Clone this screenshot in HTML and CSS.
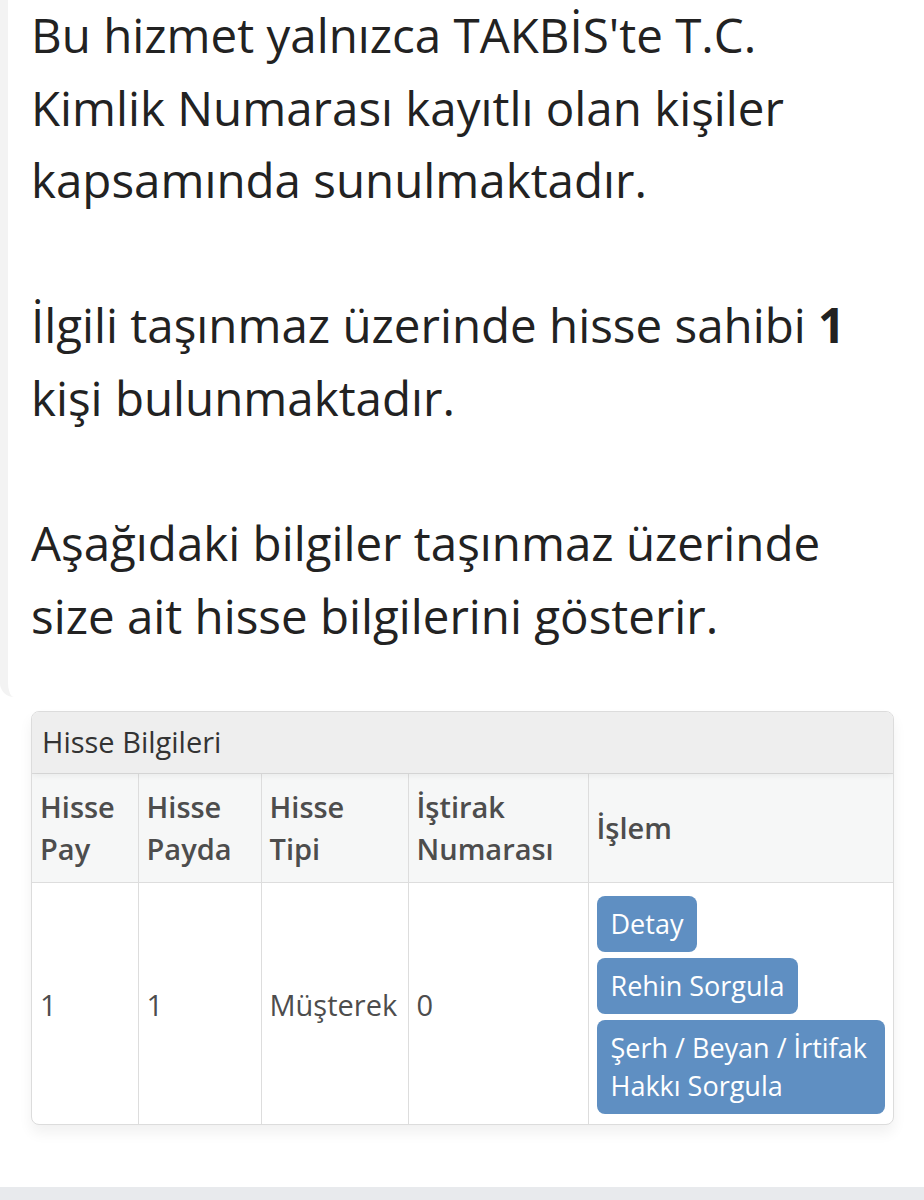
FILE: index.html
```html
<!DOCTYPE html>
<html lang="tr">
<head>
  <meta charset="UTF-8">
  <title>Hisse Bilgileri</title>
  <meta name="viewport" content="width=device-width, initial-scale=1.0">
  <link rel="stylesheet" href="styles.css">
</head>
<body>
  <div class="intro">
    <p>
      Bu hizmet yalnızca TAKBİS'te T.C. Kimlik Numarası kayıtlı olan kişiler kapsamında sunulmaktadır.
      <br><br>
      İlgili taşınmaz üzerinde hisse sahibi <strong>1</strong> kişi bulunmaktadır.
      <br><br>
      Aşağıdaki bilgiler taşınmaz üzerinde size ait hisse bilgilerini gösterir.
    </p>
  </div>

  <div class="content">
    <div class="panel">
      <div class="panel-heading">Hisse Bilgileri</div>
      <table class="share-table">
        <colgroup>
          <col class="col-pay">
          <col class="col-payda">
          <col class="col-tip">
          <col class="col-istirak">
          <col class="col-islem">
        </colgroup>
        <thead>
          <tr>
            <th>Hisse Pay</th>
            <th>Hisse Payda</th>
            <th>Hisse Tipi</th>
            <th>İştirak Numarası</th>
            <th>İşlem</th>
          </tr>
        </thead>
        <tbody>
          <tr>
            <td>1</td>
            <td>1</td>
            <td>Müşterek</td>
            <td>0</td>
            <td>
              <div class="actions">
                <button class="btn">Detay</button>
                <button class="btn">Rehin Sorgula</button>
                <button class="btn">Şerh / Beyan / İrtifak Hakkı Sorgula</button>
              </div>
            </td>
          </tr>
        </tbody>
      </table>
    </div>
  </div>

  <div class="bottom-bar"></div>
</body>
</html>
```
FILE: styles.css
```css
body {
  margin: 0;
  background: #fff;
  font-family: "Open Sans", "Noto Sans", sans-serif;
  color: #222;
  overflow: hidden;
}

.intro {
  border-left: 8px solid #f3f3f3;
  border-bottom-left-radius: 14px;
  padding: 0 30px 45px 23px;
}

.intro p {
  margin: -1px 0 0;
  font-size: 47.5px;
  line-height: 72.6px;
}

.intro strong {
  font-weight: 700;
}

.content {
  padding: 14px 30px 0 31px;
}

.panel {
  border: 1px solid #dcdcdc;
  border-radius: 8px;
  background: #fff;
  box-shadow: 0 8px 14px rgba(0, 0, 0, 0.06);
  overflow: hidden;
}

.panel-heading {
  background: #eeeeee;
  color: #333;
  font-size: 29px;
  line-height: 42px;
  padding: 9px 10px 10px;
  box-shadow: 0 3px 6px rgba(0, 0, 0, 0.05);
  position: relative;
}

.share-table {
  width: 100%;
  border-collapse: collapse;
  table-layout: fixed;
  font-size: 29px;
  line-height: 42px;
  color: #4d4d4d;
}

.col-pay { width: 106px; }
.col-payda { width: 123px; }
.col-tip { width: 147px; }
.col-istirak { width: 180px; }

.share-table th,
.share-table td {
  border: 1px solid #dddddd;
  padding: 12px 8px;
  text-align: left;
  vertical-align: middle;
}

.share-table tr > :first-child { border-left: none; }
.share-table tr > :last-child { border-right: none; }
.share-table tbody tr:last-child td { border-bottom: none; }

.share-table th {
  background: #f6f7f7;
  font-weight: 600;
}

.share-table td {
  padding-top: 13px;
  padding-bottom: 10px;
  white-space: nowrap;
}

.share-table td:last-child {
  white-space: normal;
}

.actions {
  display: flex;
  flex-direction: column;
  align-items: flex-start;
  gap: 6px;
}

.btn {
  font-family: inherit;
  font-size: 27px;
  line-height: 38px;
  padding: 9px 14px;
  color: #fff;
  background: #5f8fc2;
  border: none;
  border-radius: 8px;
  text-align: left;
}

.bottom-bar {
  margin-top: 62px;
  height: 40px;
  background: #e8eaed;
}
```
